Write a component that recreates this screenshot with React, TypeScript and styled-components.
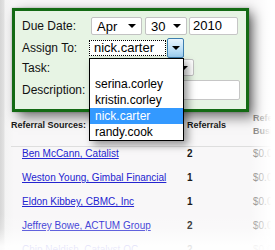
import * as React from 'react';
import styled, { createGlobalStyle } from 'styled-components';

const GlobalStyle = createGlobalStyle`
  html, body {
    margin: 0;
    padding: 0;
  }
  body {
    background: #fff;
    font-family: "Liberation Sans", Arial, sans-serif;
  }
`;

const Page = styled.div`
  position: relative;
  width: 275px;
  height: 250px;
  overflow: hidden;
  box-sizing: border-box;
  padding-top: 8px;
  background: linear-gradient(to right, #d6d6d6 0, #e2e2e2 4px, #f3f3f3 5px, #f8f7f8 14px);
`;

const Panel = styled.div`
  position: relative;
  z-index: 1;
  width: 237px;
  height: 104px;
  margin-left: 12px;
  box-sizing: border-box;
  border: 3px solid #136a13;
  background: #e7f4e4;
  box-shadow: 6px 5px 12px rgba(0, 0, 0, 0.55), 0 0 2px rgba(0, 0, 0, 0.25);
  padding: 6px 0 0 7px;
`;

const Row = styled.div<{ $h: number; $top?: number }>`
  display: flex;
  align-items: center;
  height: ${(p) => p.$h}px;
  margin-top: ${(p) => p.$top || 0}px;
`;

const Label = styled.div`
  width: 67px;
  flex: none;
  font-size: 12px;
  color: #111;
`;

const Fields = styled.div<{ $left?: number }>`
  display: flex;
  align-items: center;
  margin-left: ${(p) => p.$left || 0}px;
`;

const Select = styled.div<{ $w: number; $h?: number; $gap?: number }>`
  display: flex;
  align-items: center;
  justify-content: space-between;
  box-sizing: border-box;
  width: ${(p) => p.$w}px;
  height: ${(p) => p.$h || 18}px;
  margin-right: ${(p) => p.$gap || 0}px;
  padding: 0 5px 0 5px;
  background: #fff;
  border: 1px solid #c2c2c2;
  border-radius: 2px;
  font-size: 13px;
  color: #000;
`;

const Arrow = styled.span`
  width: 0;
  height: 0;
  border-left: 4px solid transparent;
  border-right: 4px solid transparent;
  border-top: 4px solid #000;
`;

const TextBox = styled.div<{ $w: number; $h: number }>`
  box-sizing: border-box;
  width: ${(p) => p.$w}px;
  height: ${(p) => p.$h}px;
  padding-left: 3px;
  background: #fff;
  border: 1px solid #c6c6c6;
  border-radius: 2px;
  font-size: 13px;
  line-height: ${(p) => p.$h - 2}px;
`;

const Combo = styled.div`
  position: relative;
  display: flex;
  align-items: center;
  height: 20px;
`;

const FocusText = styled.div`
  box-sizing: border-box;
  width: 77px;
  height: 16px;
  padding-left: 4px;
  background: #fff;
  border: 1px dotted #000;
  font-size: 13px;
  line-height: 14px;
`;

const DropButton = styled.div`
  display: flex;
  align-items: center;
  justify-content: center;
  box-sizing: border-box;
  width: 17px;
  height: 20px;
  margin-left: 1px;
  border: 1px solid #3d7eb0;
  border-radius: 2px;
  background: linear-gradient(#eaf5fd, #c4e3f8 50%, #9dcff1);
`;

const List = styled.div`
  position: absolute;
  z-index: 5;
  top: 20px;
  left: 0;
  width: 95px;
  box-sizing: border-box;
  padding-top: 1px;
  background: #fff;
  border: 1px solid #000;
  box-shadow: 4px 4px 8px rgba(0, 0, 0, 0.4);
`;

const Option = styled.div<{ $active?: boolean }>`
  height: 16px;
  padding-left: 5px;
  font-size: 12px;
  line-height: 16px;
  color: ${(p) => (p.$active ? '#fff' : '#000')};
  background: ${(p) => (p.$active ? '#3399ff' : 'transparent')};
`;

const Table = styled.div`
  margin-left: 11px;
`;

const HeaderRow = styled.div`
  display: grid;
  grid-template-columns: 176px 66px 1fr;
  align-items: center;
  padding-bottom: 8px;
  border-bottom: 1px solid #dedede;
  font-size: 9px;
  font-weight: bold;
  line-height: 13px;
  color: #1a1a1a;
`;

const HeadMuted = styled.div`
  color: #666;
`;

const DataRow = styled.div`
  display: grid;
  grid-template-columns: 176px 66px 1fr;
  height: 24px;
  font-size: 10px;
  line-height: 14px;
`;

const SourceLink = styled.a`
  padding-left: 11px;
  color: #2424d0;
  text-decoration: underline;
  white-space: nowrap;
`;

const Count = styled.div`
  color: #1a1a1a;
  font-weight: bold;
`;

const Money = styled.div`
  color: #777;
`;

const RightFade = styled.div`
  position: absolute;
  z-index: 10;
  top: 0;
  bottom: 0;
  left: 250px;
  right: 0;
  pointer-events: none;
  background: linear-gradient(to right, rgba(255, 255, 255, 0), #fff 85%);
`;

const BottomFade = styled.div`
  position: absolute;
  z-index: 10;
  left: 0;
  right: 0;
  top: 214px;
  bottom: 0;
  pointer-events: none;
  background: linear-gradient(rgba(255, 255, 255, 0), rgba(255, 255, 255, 0.2) 40%, rgba(255, 255, 255, 0.9) 90%);
`;

const users = ['', 'serina.corley', 'kristin.corley', 'nick.carter', 'randy.cook'];

const rows = [
  { name: 'Ben McCann, Catalist', count: 2 },
  { name: 'Weston Young, Gimbal Financial', count: 1 },
  { name: 'Eldon Kibbey, CBMC, Inc', count: 1 },
  { name: 'Jeffrey Bowe, ACTUM Group', count: 2 },
  { name: 'Chip Neldish, Catalyst OC', count: 2 },
];

export default function App() {
  return (
    <>
      <GlobalStyle />
      <Page>
        <Panel>
          <Row $h={18}>
            <Label>Due Date:</Label>
            <Fields $left={2}>
              <Select $w={51} $gap={3}>Apr<Arrow /></Select>
              <Select $w={42} $gap={2}>30<Arrow /></Select>
              <TextBox $w={49} $h={18}>2010</TextBox>
            </Fields>
          </Row>
          <Row $h={22} $top={2}>
            <Label>Assign To:</Label>
            <Combo>
              <FocusText>nick.carter</FocusText>
              <DropButton><Arrow /></DropButton>
              <List>
                {users.map((u, i) => (
                  <Option key={i} $active={u === 'nick.carter'}>{u}</Option>
                ))}
              </List>
            </Combo>
          </Row>
          <Row $h={17}>
            <Label>Task:</Label>
            <Select $w={105} $h={17}><span /><Arrow /></Select>
          </Row>
          <Row $h={24} $top={2}>
            <Label>Description:</Label>
            <TextBox $w={151} $h={20} />
          </Row>
        </Panel>
        <Table>
          <HeaderRow>
            <div>Referral Sources:</div>
            <div>Referrals</div>
            <HeadMuted>Referral<br />Business</HeadMuted>
          </HeaderRow>
          {rows.map((r) => (
            <DataRow key={r.name}>
              <div><SourceLink href="#">{r.name}</SourceLink></div>
              <Count>{r.count}</Count>
              <Money>$0.00</Money>
            </DataRow>
          ))}
        </Table>
        <RightFade />
        <BottomFade />
      </Page>
    </>
  );
}
